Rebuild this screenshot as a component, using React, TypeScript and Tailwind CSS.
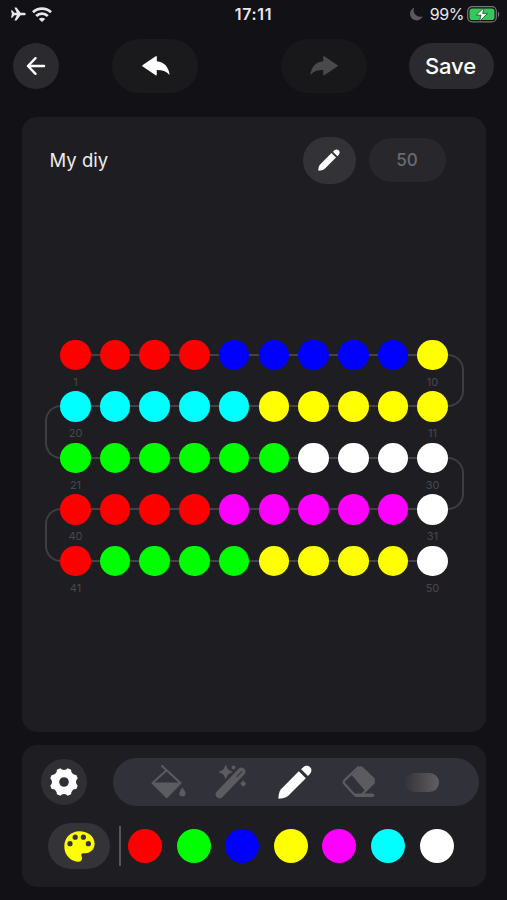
const RED = '#ff0000';
const GREEN = '#00ff00';
const BLUE = '#0000ff';
const YELLOW = '#ffff00';
const MAGENTA = '#ff00ff';
const CYAN = '#00ffff';
const WHITE = '#ffffff';

const palette = [RED, GREEN, BLUE, YELLOW, MAGENTA, CYAN, WHITE];

const fill = (color: string, n: number): string[] => Array(n).fill(color);

const rows = [
  { start: '1', end: '10', turn: 'right', beads: [...fill(RED, 4), ...fill(BLUE, 5), YELLOW] },
  { start: '20', end: '11', turn: 'left', beads: [...fill(CYAN, 5), ...fill(YELLOW, 5)] },
  { start: '21', end: '30', turn: 'right', beads: [...fill(GREEN, 6), ...fill(WHITE, 4)] },
  { start: '40', end: '31', turn: 'left', beads: [...fill(RED, 4), ...fill(MAGENTA, 5), WHITE] },
  { start: '41', end: '50', turn: '', beads: [RED, ...fill(GREEN, 4), ...fill(YELLOW, 4), WHITE] },
];

// Eight teeth with a concave notch between each pair
const gearPath = () => {
  const point = (deg: number) => {
    const a = (deg * Math.PI) / 180;
    return `${(14 + 14.2 * Math.cos(a)).toFixed(2)} ${(14 + 14.2 * Math.sin(a)).toFixed(2)}`;
  };
  let d = `M${point(-15)}`;
  for (let i = 0; i < 8; i++) {
    d += `A4.8 4.8 0 0 0 ${point(i * 45 + 15)}L${point(i * 45 + 30)}`;
  }
  return `${d}ZM14 9.2a4.8 4.8 0 1 0 0 9.6a4.8 4.8 0 1 0 0-9.6Z`;
};

const PencilIcon = ({ size }: { size: number }) => (
  <svg width={size} height={size} viewBox="0 0 34 34" fill="#fff">
    <path d="M.4 33.7C.5 30 1 26.5 3 24.3L20.8 6.3 27.8 13.3 10 31C7.8 33 4 33.5.4 33.7Z" />
    <path d="M23.1 4.2 25.5 1.9C27.3.1 30.2.3 32 2.1 33.9 4 34 6.8 32.1 8.7L30 11.1Z" />
  </svg>
);

const UndoIcon = ({ className }: { className: string }) => (
  <svg width="28" height="20" viewBox="0 0 28 20" className={className} fill="currentColor">
    <path d="M.7 9.1 13.7.3C14.3-.1 14.8.2 14.8.9V5.3C22 6 26.8 11 27.6 19 24 15.2 20 14 14.8 14.1V18.6C14.8 19.4 14.3 19.6 13.7 19.2L.7 10.6C.1 10.2.1 9.5.7 9.1Z" />
  </svg>
);

const StatusBar = () => (
  <div className="grid h-7 grid-cols-[1fr_60px_1fr] items-center pl-[11px] pr-[7px] text-[#e8e8ea]">
    <div className="flex items-center gap-[6px]">
      <svg width="15" height="14" viewBox="0 0 16 15" fill="currentColor">
        <path d="M0 3.6H1.3L3.6 6.1H6.2L3.6.5H5.9L10.2 6.1H13.5C15 6.1 15.8 6.8 15.8 7.5S15 8.9 13.5 8.9H10.2L5.9 14.5H3.6L6.2 8.9H3.6L1.3 11.4H0L.9 7.5Z" />
      </svg>
      <svg width="20" height="15" viewBox="0 0 20 15" fill="none" stroke="currentColor" strokeWidth="2.8">
        <path d="M1 5.3A12.8 12.8 0 0 1 19 5.3" />
        <path d="M4.2 9A8.3 8.3 0 0 1 15.8 9" />
        <path d="M10 15 6.8 12A4.6 4.6 0 0 1 13.2 12Z" fill="currentColor" stroke="none" />
      </svg>
    </div>
    <span className="-ml-1 text-center text-base font-semibold leading-none tracking-[0.7px]">17:11</span>
    <div className="flex items-center justify-end">
      <svg width="13" height="14" viewBox="0 0 13 14" fill="#59595d" className="mr-[7px]">
        <path d="M4.4.6A6.6 6.6 0 1 0 12.8 9.2 6.4 6.4 0 0 1 4.4.6Z" />
      </svg>
      <span className="mr-[3px] text-base leading-none tracking-[-0.4px]">99%</span>
      <svg width="33" height="17" viewBox="0 0 33 17">
        <rect x=".7" y=".7" width="28.6" height="15.2" rx="4.5" fill="none" stroke="#77777b" strokeWidth="1.2" />
        <rect x="2.5" y="2.5" width="25" height="11.6" rx="2.8" fill="#34c759" />
        <path d="M31 5.5c1.6.6 1.6 5 0 5.6Z" fill="#77777b" />
        <path d="M17 1.8 9.3 9H14L12.5 15.2 20.5 7.6H15.7Z" fill="#fff" stroke="#16351e" strokeWidth=".7" />
      </svg>
    </div>
  </div>
);

const Header = () => (
  <header className="flex h-[75px] items-center pl-[13px]">
    <button className="flex size-[46px] items-center justify-center rounded-full bg-[#2b2b2f]">
      <svg width="20" height="20" viewBox="0 0 20 20" fill="none" stroke="#fff" strokeWidth="2.4" strokeLinecap="round" strokeLinejoin="round">
        <path d="M18 10H2M9.5 2.2 2 10 9.5 17.8" />
      </svg>
    </button>
    <button className="ml-[53px] flex h-[54px] w-[86px] items-center justify-center rounded-full bg-[#1a1a1c] pl-px">
      <UndoIcon className="text-white" />
    </button>
    <button className="ml-[83px] flex h-[54px] w-[86px] items-center justify-center rounded-full bg-[#18181a]">
      <UndoIcon className="-scale-x-100 text-[#49494b]" />
    </button>
    <button className="ml-[42px] h-[46px] w-[85px] rounded-full bg-[#2b2b2f] pr-0.5 pt-px text-[22px] font-medium tracking-[-0.1px] text-white">
      Save
    </button>
  </header>
);

const Strand = () => (
  <div className="mx-[38px] mt-[156px]">
    {rows.map((row) => (
      <div key={row.start} className="relative h-[51.5px]">
        <div className="absolute inset-x-4 top-[14px] h-[2px] bg-[#434347]" />
        {row.turn === 'right' && (
          <div className="absolute -right-[15.5px] top-[14px] h-[53.5px] w-[22px] rounded-r-[16px] border-2 border-l-0 border-[#3e3e42]" />
        )}
        {row.turn === 'left' && (
          <div className="absolute -left-[15.5px] top-[14px] h-[53.5px] w-[22px] rounded-l-[16px] border-2 border-r-0 border-[#3e3e42]" />
        )}
        <div className="relative flex justify-between">
          {row.beads.map((color, i) => (
            <span key={i} className="size-[30.5px] rounded-full" style={{ backgroundColor: color }} />
          ))}
        </div>
        <div className="mt-[5.5px] flex justify-between text-[11px] leading-[13px] text-[#48484c]">
          <span className="w-[31px] text-center">{row.start}</span>
          <span className="w-[31px] text-center">{row.end}</span>
        </div>
      </div>
    ))}
  </div>
);

const Tools = () => (
  <div className="ml-[26px] flex h-12 w-[366px] items-center rounded-full bg-[#31313a] pl-[38px]">
    {/* Fill bucket */}
    <svg width="36" height="34" viewBox="0 0 36 34" fill="#5c5b60">
      <path d="M11 1 29.5 18 15.7 32 1.5 18 15.3 5.5" fill="none" stroke="#5c5b60" strokeWidth="2" strokeLinejoin="round" strokeLinecap="round" />
      <path d="M1 17.5H30L16.8 32.3Q15.7 33.5 14.6 32.3Z" />
      <path d="M31.3 22.2C32.8 24.7 34.6 26.7 34.6 28.6 34.6 30.5 33.2 31.5 31.4 31.5S28.2 30.5 28.2 28.6C28.2 26.7 30 24.7 31.3 22.2Z" />
    </svg>
    {/* Magic wand */}
    <svg width="32" height="34" viewBox="0 0 32 34" fill="#5c5b60" className="ml-[28px]">
      <path d="M4.7 29.3 26.3 6.7" stroke="#5c5b60" strokeWidth="8" strokeLinecap="round" />
      <path d="M22 11.5 26.8 6.5" stroke="#3a3a42" strokeWidth="1.4" strokeLinecap="round" />
      <path d="M10.7.7Q11.7 6 17 7 11.7 8 10.7 13.5 9.7 8 4.3 7 9.7 6 10.7.7Z" stroke="#5c5b60" strokeWidth="1.2" />
      <circle cx="18.5" cy="2.4" r="1.9" />
      <path d="M28.2 15.5 31.2 18.7 28.2 22 25.2 18.7Z" />
    </svg>
    <div className="ml-[31px]">
      <PencilIcon size={34} />
    </div>
    {/* Eraser */}
    <svg width="34" height="34" viewBox="0 0 34 34" className="ml-[30px]">
      <path d="M17 1.5 2.4 15.4Q.9 17 2.4 18.7L12.7 30H31M16.5 2 32 17.5 19.5 30" fill="none" stroke="#5c5b60" strokeWidth="2.2" strokeLinejoin="round" />
      <path d="M10.5 9.8 17 2.5Q18.8.2 21 2.2L31.8 12.5Q34 14.7 32 17L23.5 26.2Z" fill="#5c5b60" />
      <path d="M10.3 8.9 24 24.7" stroke="#5c5b60" strokeWidth="2.5" />
      <path d="M14 30.3H30.5" stroke="#5c5b60" strokeWidth="3.4" strokeLinecap="round" />
    </svg>
    <span className="ml-[29px] h-[19px] w-[34px] rounded-full bg-linear-to-r from-[#353439] to-[#625f61]" />
  </div>
);

export default function App() {
  return (
    <div className="h-[900px] w-[507px] overflow-hidden bg-[#111116] font-['Inter',sans-serif]">
      <StatusBar />
      <Header />

      <main className="ml-[22px] mt-[13.5px] h-[615.5px] w-[464px] rounded-[15px] bg-[#1e1e22] pt-5">
        <div className="flex h-[47px] items-center pl-[27.5px]">
          <h1 className="w-[253px] text-[18.5px] leading-none text-[#ececee]">My diy</h1>
          <button className="flex h-[47px] w-[53px] items-center justify-center rounded-full bg-[#333337]">
            <PencilIcon size={22} />
          </button>
          <span className="ml-[13px] flex h-[44px] w-[77px] items-center justify-center rounded-full bg-[#28282c] pt-px text-[17px] font-medium text-[#6b6b6f]">
            50
          </span>
        </div>
        <Strand />
      </main>

      <section className="ml-[22px] mt-[13px] h-[142px] w-[464px] rounded-[15px] bg-[#1e1e22] pt-[13px]">
        <div className="flex items-center pl-[19px]">
          <button className="flex size-[46px] items-center justify-center rounded-full bg-[#303034]">
            <svg width="28" height="28" viewBox="0 0 28 28" fill="#fff" fillRule="evenodd">
              <path d={gearPath()} />
            </svg>
          </button>
          <Tools />
        </div>

        <div className="mt-[17px] flex items-center pl-[26px]">
          <button className="flex h-[46px] w-[62px] items-center justify-center rounded-full bg-[#343438]">
            <svg width="31" height="31" viewBox="0 0 31 31" fill="#ffff00">
              <path d="M15.3.3C24 .3 30.6 5.5 30.6 12.8 30.6 18.5 26.5 22 21.5 22.2H19.2C17.4 22.2 16.7 23.7 17.5 25 18.5 26.7 18.3 30.7 15 30.7 6.5 30.7.3 24 .3 15.5.3 6.8 7 .3 15.3.3Z" />
              <g fill="#343438">
                <circle cx="6" cy="12.7" r="2.6" />
                <circle cx="11.2" cy="6.2" r="2.6" />
                <circle cx="19.4" cy="6.2" r="2.6" />
                <circle cx="24.4" cy="12.7" r="2.6" />
              </g>
            </svg>
          </button>
          <span className="ml-[9px] h-10 w-[1.5px] bg-[#56565a]" />
          <div className="ml-[7.5px] flex gap-[14.6px]">
            {palette.map((color) => (
              <button key={color} className="size-[34px] rounded-full" style={{ backgroundColor: color }} />
            ))}
          </div>
        </div>
      </section>
    </div>
  );
}
